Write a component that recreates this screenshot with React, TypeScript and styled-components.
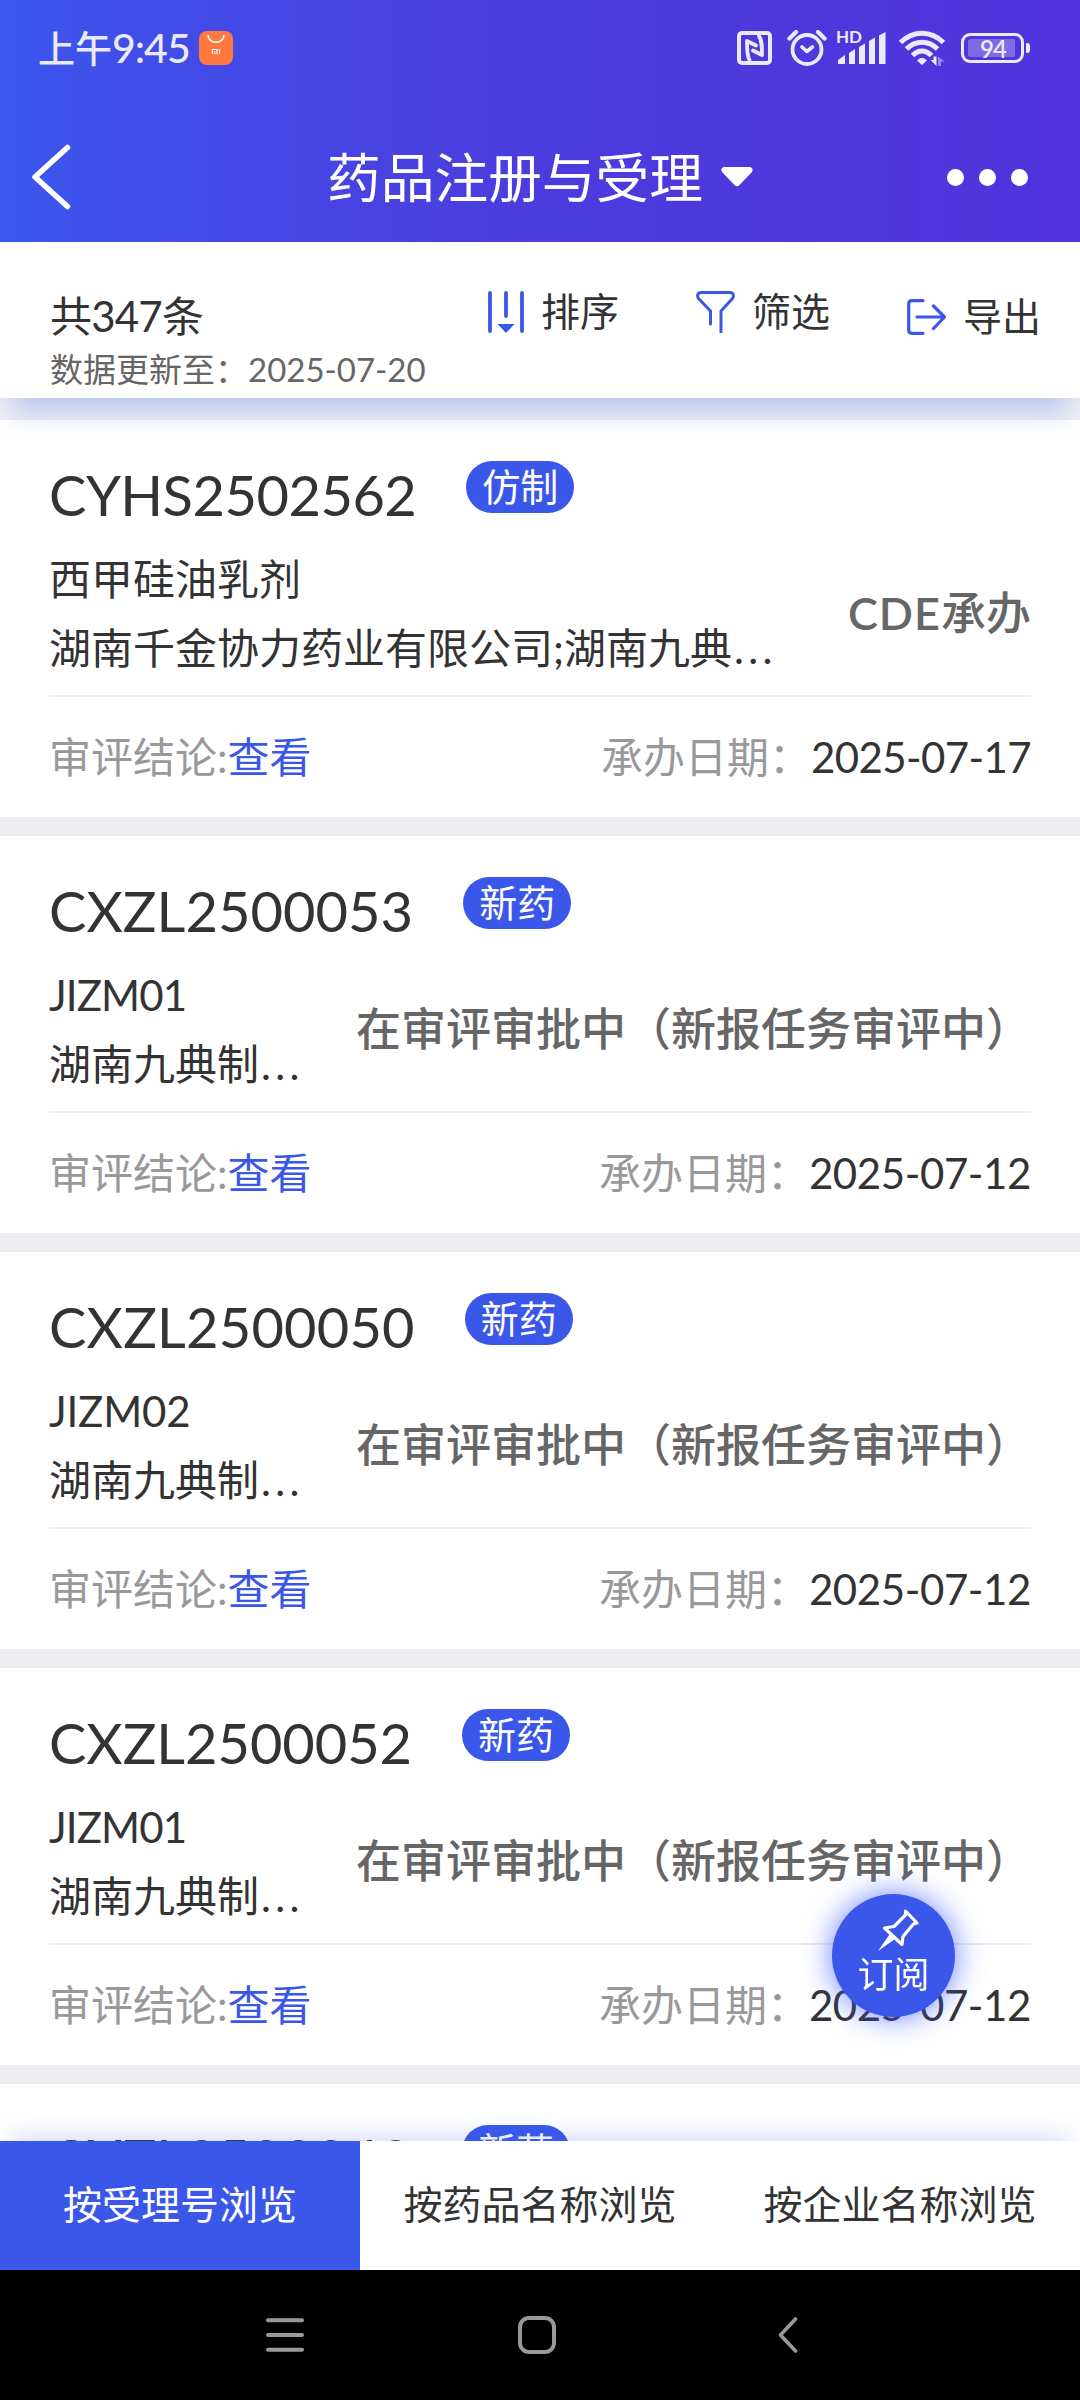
import React from "react";
import styled, { createGlobalStyle } from "styled-components";

const BLUE = "#3a57ea";

const GlobalStyle = createGlobalStyle`
  * { box-sizing: border-box; }
  body {
    margin: 0;
    background: #efeef4;
    font-family: Lato, "Noto Sans CJK SC", sans-serif;
    color: #333;
  }
  svg { display: block; flex: none; }
`;

const Screen = styled.div`
  width: 1080px;
  height: 2400px;
  display: flex;
  flex-direction: column;
  overflow: hidden;
  background: #efeef4;
  white-space: nowrap;
`;

const Header = styled.header`
  height: 242px;
  flex: none;
  color: #fff;
  background: linear-gradient(90deg, #3a57ed 0%, #4449e5 20%, #4b3cdd 50%, #5133db 100%);
`;

const StatusBar = styled.div`
  height: 96px;
  padding: 0 50px 0 38px;
  display: flex;
  align-items: center;
  color: #ebe9fc;
`;

const Clock = styled.span`
  font-size: 37px;
  font-weight: 500;
  line-height: 40px;
  margin-right: 9px;
  .digits { font-size: 41px; letter-spacing: -1px; }
`;

const StatusIcons = styled.div`
  margin-left: auto;
  display: flex;
  align-items: center;
`;

const Gap = styled.i<{ $w: number }>`
  width: ${(p) => p.$w}px;
`;

const Battery = styled.div`
  width: 63px;
  height: 30px;
  border: 3px solid #ebe9fc;
  border-radius: 9px;
  padding: 3px 6px 3px 4px;
`;

const BatteryLevel = styled.div`
  height: 18px;
  background: rgba(255, 255, 255, 0.27);
  border-radius: 3px 0 0 3px;
  text-align: center;
  font-size: 24px;
  font-weight: 600;
  line-height: 19px;
  letter-spacing: -1px;
  padding-left: 3px;
`;

const BatteryTip = styled.i`
  width: 4px;
  height: 10px;
  margin-left: 2px;
  border-radius: 0 3px 3px 0;
  background: #ebe9fc;
`;

const TitleBar = styled.div`
  height: 146px;
  padding: 16px 52px 0 31px;
  display: grid;
  grid-template-columns: 120px 1fr 101px;
  align-items: center;
`;

const Title = styled.h1`
  margin: 0;
  padding-left: 2px;
  display: flex;
  justify-content: center;
  align-items: center;
  gap: 18px;
  font-size: 53.7px;
  font-weight: 400;
  line-height: 60px;
`;

const Dots = styled.div`
  display: flex;
  justify-content: flex-end;
  gap: 15px;
  i { width: 17px; height: 17px; border-radius: 50%; background: #fff; }
`;

const Toolbar = styled.section`
  position: relative;
  z-index: 1;
  height: 156px;
  flex: none;
  display: flex;
  justify-content: space-between;
  padding: 0 39px 0 50px;
  background: #fff;
  box-shadow: 0 24px 28px -13px rgba(58, 105, 225, 0.34);
`;

const Summary = styled.div`
  padding-top: 44px;
`;

const Total = styled.div`
  font-size: 42px;
  line-height: 60px;
  letter-spacing: -0.8px;
`;

const Updated = styled.div`
  margin-top: -1px;
  font-size: 33px;
  line-height: 48px;
  color: #666;
`;

const Actions = styled.div`
  display: flex;
  align-items: flex-start;
  gap: 77px;
  padding-top: 49px;
`;

const Action = styled.div<{ $drop?: number }>`
  display: flex;
  align-items: center;
  gap: 17px;
  height: 42px;
  margin-top: ${(p) => p.$drop ?? 0}px;
  font-size: 39px;
  line-height: 40px;
  span { height: 42px; }
`;

const List = styled.main`
  flex: 1;
  min-height: 0;
  overflow: hidden;
  padding-top: 22px;
  display: flex;
  flex-direction: column;
  gap: 19px;
`;

const Card = styled.article`
  height: 397px;
  flex: none;
  padding: 40px 49px 0;
  background: #fff;
`;

const CardHead = styled.div`
  display: flex;
  align-items: flex-start;
  gap: 50px;
  height: 85px;
`;

const Code = styled.div<{ $track: number }>`
  font-size: 56px;
  line-height: 70px;
  letter-spacing: ${(p) => p.$track}px;
`;

const Badge = styled.span`
  width: 108px;
  height: 52px;
  margin-top: 1px;
  border-radius: 26px;
  background: ${BLUE};
  color: #fff;
  font-size: 38px;
  line-height: 51px;
  text-align: center;
`;

const CardBody = styled.div`
  display: flex;
  justify-content: space-between;
  align-items: center;
  height: 150px;
  padding-bottom: 13px;
`;

const Names = styled.div`
  font-size: 42px;
  line-height: 69px;
`;

const Drug = styled.div<{ $track: number }>`
  letter-spacing: ${(p) => p.$track}px;
`;

const Ellipsis = styled.span`
  letter-spacing: 4.3px;
  margin-left: 2px;
`;

const Status = styled.div`
  font-size: 45px;
  font-weight: 500;
  line-height: 60px;
  margin-bottom: 1px;
  color: #666;
  .latin { font-weight: 600; letter-spacing: 1px; }
`;

const CardFoot = styled.div`
  display: flex;
  justify-content: space-between;
  align-items: center;
  border-top: 2px solid #eee;
  height: 122px;
  font-size: 42px;
  line-height: 60px;
  color: #999;
`;

const Link = styled.a`
  color: ${BLUE};
`;

const DateText = styled.span<{ $track: number }>`
  color: #333;
  letter-spacing: ${(p) => p.$track}px;
`;

const Tabs = styled.nav`
  position: relative;
  z-index: 1;
  height: 129px;
  flex: none;
  display: grid;
  grid-template-columns: repeat(3, 1fr);
  background: #fff;
  box-shadow: 0 -16px 26px -14px rgba(58, 97, 228, 0.27);
`;

const Tab = styled.div<{ $active?: boolean }>`
  display: flex;
  align-items: center;
  justify-content: center;
  padding-bottom: 3px;
  font-size: 39px;
  line-height: 60px;
  color: ${(p) => (p.$active ? "#fff" : "#333")};
  background: ${(p) => (p.$active ? BLUE : "#fff")};
`;

const SystemNav = styled.footer`
  height: 130px;
  flex: none;
  background: #000;
  display: flex;
  align-items: center;
  gap: 214px;
  padding: 0 0 0 266px;
  svg:last-child { margin-left: 8px; }
`;

const Subscribe = styled.button`
  position: fixed;
  z-index: 2;
  left: 832px;
  top: 1894px;
  width: 123px;
  height: 123px;
  padding: 15px 0 0;
  border: 0;
  border-radius: 50%;
  background: ${BLUE};
  color: #fff;
  font: 36px/46px Lato, "Noto Sans CJK SC", sans-serif;
  display: flex;
  flex-direction: column;
  align-items: center;
  box-shadow: 0 0 30px rgba(58, 87, 255, 0.75);
  svg { margin-left: 9px; }
`;

const StoreIcon = () => (
  <svg width="34" height="34" viewBox="0 0 34 34" fill="none">
    <rect width="34" height="34" rx="8" fill="#ff7840" />
    <path d="M9 4c0 9.500 16 9.500 16 0" stroke="#fff" strokeWidth="1.600" />
    <path d="M13.500 23v-4.500h4.500V23M15.800 20.500V23M20.500 18v5" stroke="#fff" strokeWidth="1.200" />
  </svg>
);

const NfcIcon = () => (
  <svg width="35" height="34" viewBox="0 0 35 34" fill="none" stroke="#ebe9fc" strokeLinecap="round" strokeLinejoin="round">
    <rect x="2" y="2" width="31" height="30" rx="3" strokeWidth="4" />
    <path d="M12.500 29C10 25 10 18 10 10L19 14.500" strokeWidth="3.800" />
    <path d="M22 5C25 9 25 16 25 24L16 19.500" strokeWidth="3.800" />
  </svg>
);

const AlarmIcon = () => (
  <svg width="40" height="36" viewBox="0 0 40 36" fill="none" stroke="#ebe9fc" strokeLinecap="round" strokeLinejoin="round">
    <circle cx="20" cy="19.500" r="14.500" strokeWidth="3.800" />
    <path d="M2.500 8.500L9 2M37.500 8.500L31 2" strokeWidth="4.200" />
    <path d="M15 17l4.800 4.500L25.500 17" strokeWidth="3.600" />
  </svg>
);

const HdLabel = styled.span`
  font-size: 17px;
  font-weight: 700;
  line-height: 12px;
  height: 12px;
`;

const SignalBox = styled.div`
  display: grid;
  width: 50px;
  height: 34px;
  > * { grid-area: 1 / 1; }
`;

const Signal = () => (
  <SignalBox>
    <HdLabel>HD</HdLabel>
    <svg width="50" height="34" viewBox="0 0 50 34" fill="#ebe9fc">
      <path d="M2 33v-4l7-5v9zM13 33V22l6-4v15zM23 33V16l6-3.500V33zM33 33V10l6-3.500V33zM43 33V4.500L49.500 1v32z" />
    </svg>
  </SignalBox>
);

const WifiIcon = () => (
  <svg width="47" height="36" viewBox="0 0 47 36" fill="none" stroke="#ebe9fc" strokeWidth="5">
    <path d="M1.500 12.500C14 0 32 0 44.500 12.500" />
    <path d="M7.500 19C16.500 10 29.500 10 38.500 19" />
    <path d="M13.500 25.500C19.500 19.500 26.500 19.500 32.500 25.500" />
    <path d="M18 30.500q5-5.500 10 0L23 35z" fill="#ebe9fc" stroke="none" />
    <path d="M31.500 30h3v-3.500h3V36z" fill="#ebe9fc" stroke="none" />
    <path d="M39 36v-9.500l6.500 5H42V36z" fill="#9a87f0" stroke="none" />
  </svg>
);

const BackIcon = () => (
  <svg width="40" height="66" viewBox="0 0 40 66" fill="none" stroke="#fff" strokeWidth="5.500" strokeLinecap="round" strokeLinejoin="round">
    <path d="M36.500 3.500L4 33l32.500 29.500" />
  </svg>
);

const CaretIcon = () => (
  <svg width="32" height="20" viewBox="0 0 32 20" fill="#fff">
    <path d="M3 0h26q4.500 1.500 1.500 5.500L18.500 18q-2.500 2.500-5 0L1.500 5.500Q-1.500 1.500 3 0z" />
  </svg>
);

const SortIcon = () => (
  <svg width="36" height="42" viewBox="0 0 36 42" fill="none" stroke={BLUE} strokeWidth="3.800" strokeLinecap="round">
    <path d="M2 2v38M34 2v38M18 2v23" />
    <path d="M9.500 33h17L18 42z" fill={BLUE} stroke="none" />
  </svg>
);

const FilterIcon = () => (
  <svg width="39" height="42" viewBox="0 0 39 42" fill="none" stroke={BLUE} strokeWidth="3" strokeLinecap="round" strokeLinejoin="round">
    <path d="M14.500 33V20L2.500 7.500C0.500 4.500 2 1.500 5 1.500h29c3 0 4.500 3 2.500 6L25 20v21" />
  </svg>
);

const ExportIcon = () => (
  <svg width="39" height="36" viewBox="0 0 39 36" fill="none" stroke={BLUE} strokeWidth="3.200" strokeLinecap="round" strokeLinejoin="round">
    <path d="M16 1.700H5q-3.300 0-3.300 3.300v26q0 3.300 3.300 3.300h11M10 18h27.500M26.500 7L37.500 18 26.500 29.500" />
  </svg>
);

const PinIcon = () => (
  <svg width="42" height="42" viewBox="0 0 42 42" fill="none" stroke="#fff" strokeWidth="3.200" strokeLinejoin="round">
    <path d="M28.500 2L40 14l-3.500 1L26 27.500l-1 8L7.500 19l9.500-1.500L28.500 6z" />
    <path d="M12.500 25.500L1 42l17-12z" fill="#fff" stroke="none" />
  </svg>
);

const MenuIcon = () => (
  <svg width="38" height="34" viewBox="0 0 38 34" stroke="#999" strokeWidth="4" strokeLinecap="round">
    <path d="M2 2.300h34M2 17h34M2 31.700h34" />
  </svg>
);

const HomeIcon = () => (
  <svg width="38" height="38" viewBox="0 0 38 38" fill="none" stroke="#999" strokeWidth="4">
    <rect x="2" y="2" width="34" height="34" rx="9" />
  </svg>
);

const NavBackIcon = () => (
  <svg width="20" height="36" viewBox="0 0 20 36" fill="none" stroke="#999" strokeWidth="3.600" strokeLinecap="round" strokeLinejoin="round">
    <path d="M17.500 2L2.500 18l15 16" />
  </svg>
);

interface Item {
  code: string;
  track: number;
  kind: string;
  drug: string;
  drugTrack: number;
  company: string;
  agency?: string;
  status: string;
  date: string;
  dateTrack: number;
}

const REVIEW = "在审评审批中（新报任务审评中）";

const items: Item[] = [
  { code: "CYHS2502562", track: -0.5, kind: "仿制", drug: "西甲硅油乳剂", drugTrack: 0, company: "湖南千金协力药业有限公司;湖南九典", agency: "CDE", status: "承办", date: "2025-07-17", dateTrack: -0.6 },
  { code: "CXZL2500053", track: 0.05, kind: "新药", drug: "JIZM01", drugTrack: -0.9, company: "湖南九典制", status: REVIEW, date: "2025-07-12", dateTrack: -0.4 },
  { code: "CXZL2500050", track: 0.2, kind: "新药", drug: "JIZM02", drugTrack: -0.2, company: "湖南九典制", status: REVIEW, date: "2025-07-12", dateTrack: -0.4 },
  { code: "CXZL2500052", track: -0.05, kind: "新药", drug: "JIZM01", drugTrack: -0.9, company: "湖南九典制", status: REVIEW, date: "2025-07-12", dateTrack: -0.4 },
  { code: "CXZL2500049", track: -0.05, kind: "新药", drug: "JIZM02", drugTrack: -0.2, company: "湖南九典制", status: REVIEW, date: "2025-07-12", dateTrack: -0.4 },
];

const Record = ({ item }: { item: Item }) => (
  <Card>
    <CardHead>
      <Code $track={item.track}>{item.code}</Code>
      <Badge>{item.kind}</Badge>
    </CardHead>
    <CardBody>
      <Names>
        <Drug $track={item.drugTrack}>{item.drug}</Drug>
        <div>{item.company}<Ellipsis>...</Ellipsis></div>
      </Names>
      <Status>
        {item.agency && <span className="latin">{item.agency}</span>}
        {item.status}
      </Status>
    </CardBody>
    <CardFoot>
      <div>审评结论:<Link>查看</Link></div>
      <div>承办日期：<DateText $track={item.dateTrack}>{item.date}</DateText></div>
    </CardFoot>
  </Card>
);

export default function App() {
  return (
    <Screen>
      <GlobalStyle />
      <Header>
        <StatusBar>
          <Clock>上午<span className="digits">9:45</span></Clock>
          <StoreIcon />
          <StatusIcons>
            <NfcIcon />
            <Gap $w={15} />
            <AlarmIcon />
            <Gap $w={9} />
            <Signal />
            <Gap $w={13} />
            <WifiIcon />
            <Gap $w={15} />
            <Battery><BatteryLevel>94</BatteryLevel></Battery>
            <BatteryTip />
          </StatusIcons>
        </StatusBar>
        <TitleBar>
          <BackIcon />
          <Title>药品注册与受理<CaretIcon /></Title>
          <Dots><i /><i /><i /></Dots>
        </TitleBar>
      </Header>
      <Toolbar>
        <Summary>
          <Total>共347条</Total>
          <Updated>数据更新至：2025-07-20</Updated>
        </Summary>
        <Actions>
          <Action><SortIcon /><span>排序</span></Action>
          <Action><FilterIcon /><span>筛选</span></Action>
          <Action $drop={5}><ExportIcon /><span>导出</span></Action>
        </Actions>
      </Toolbar>
      <List>
        {items.map((item) => <Record key={item.code} item={item} />)}
      </List>
      <Tabs>
        <Tab $active>按受理号浏览</Tab>
        <Tab>按药品名称浏览</Tab>
        <Tab>按企业名称浏览</Tab>
      </Tabs>
      <SystemNav>
        <MenuIcon />
        <HomeIcon />
        <NavBackIcon />
      </SystemNav>
      <Subscribe><PinIcon />订阅</Subscribe>
    </Screen>
  );
}
